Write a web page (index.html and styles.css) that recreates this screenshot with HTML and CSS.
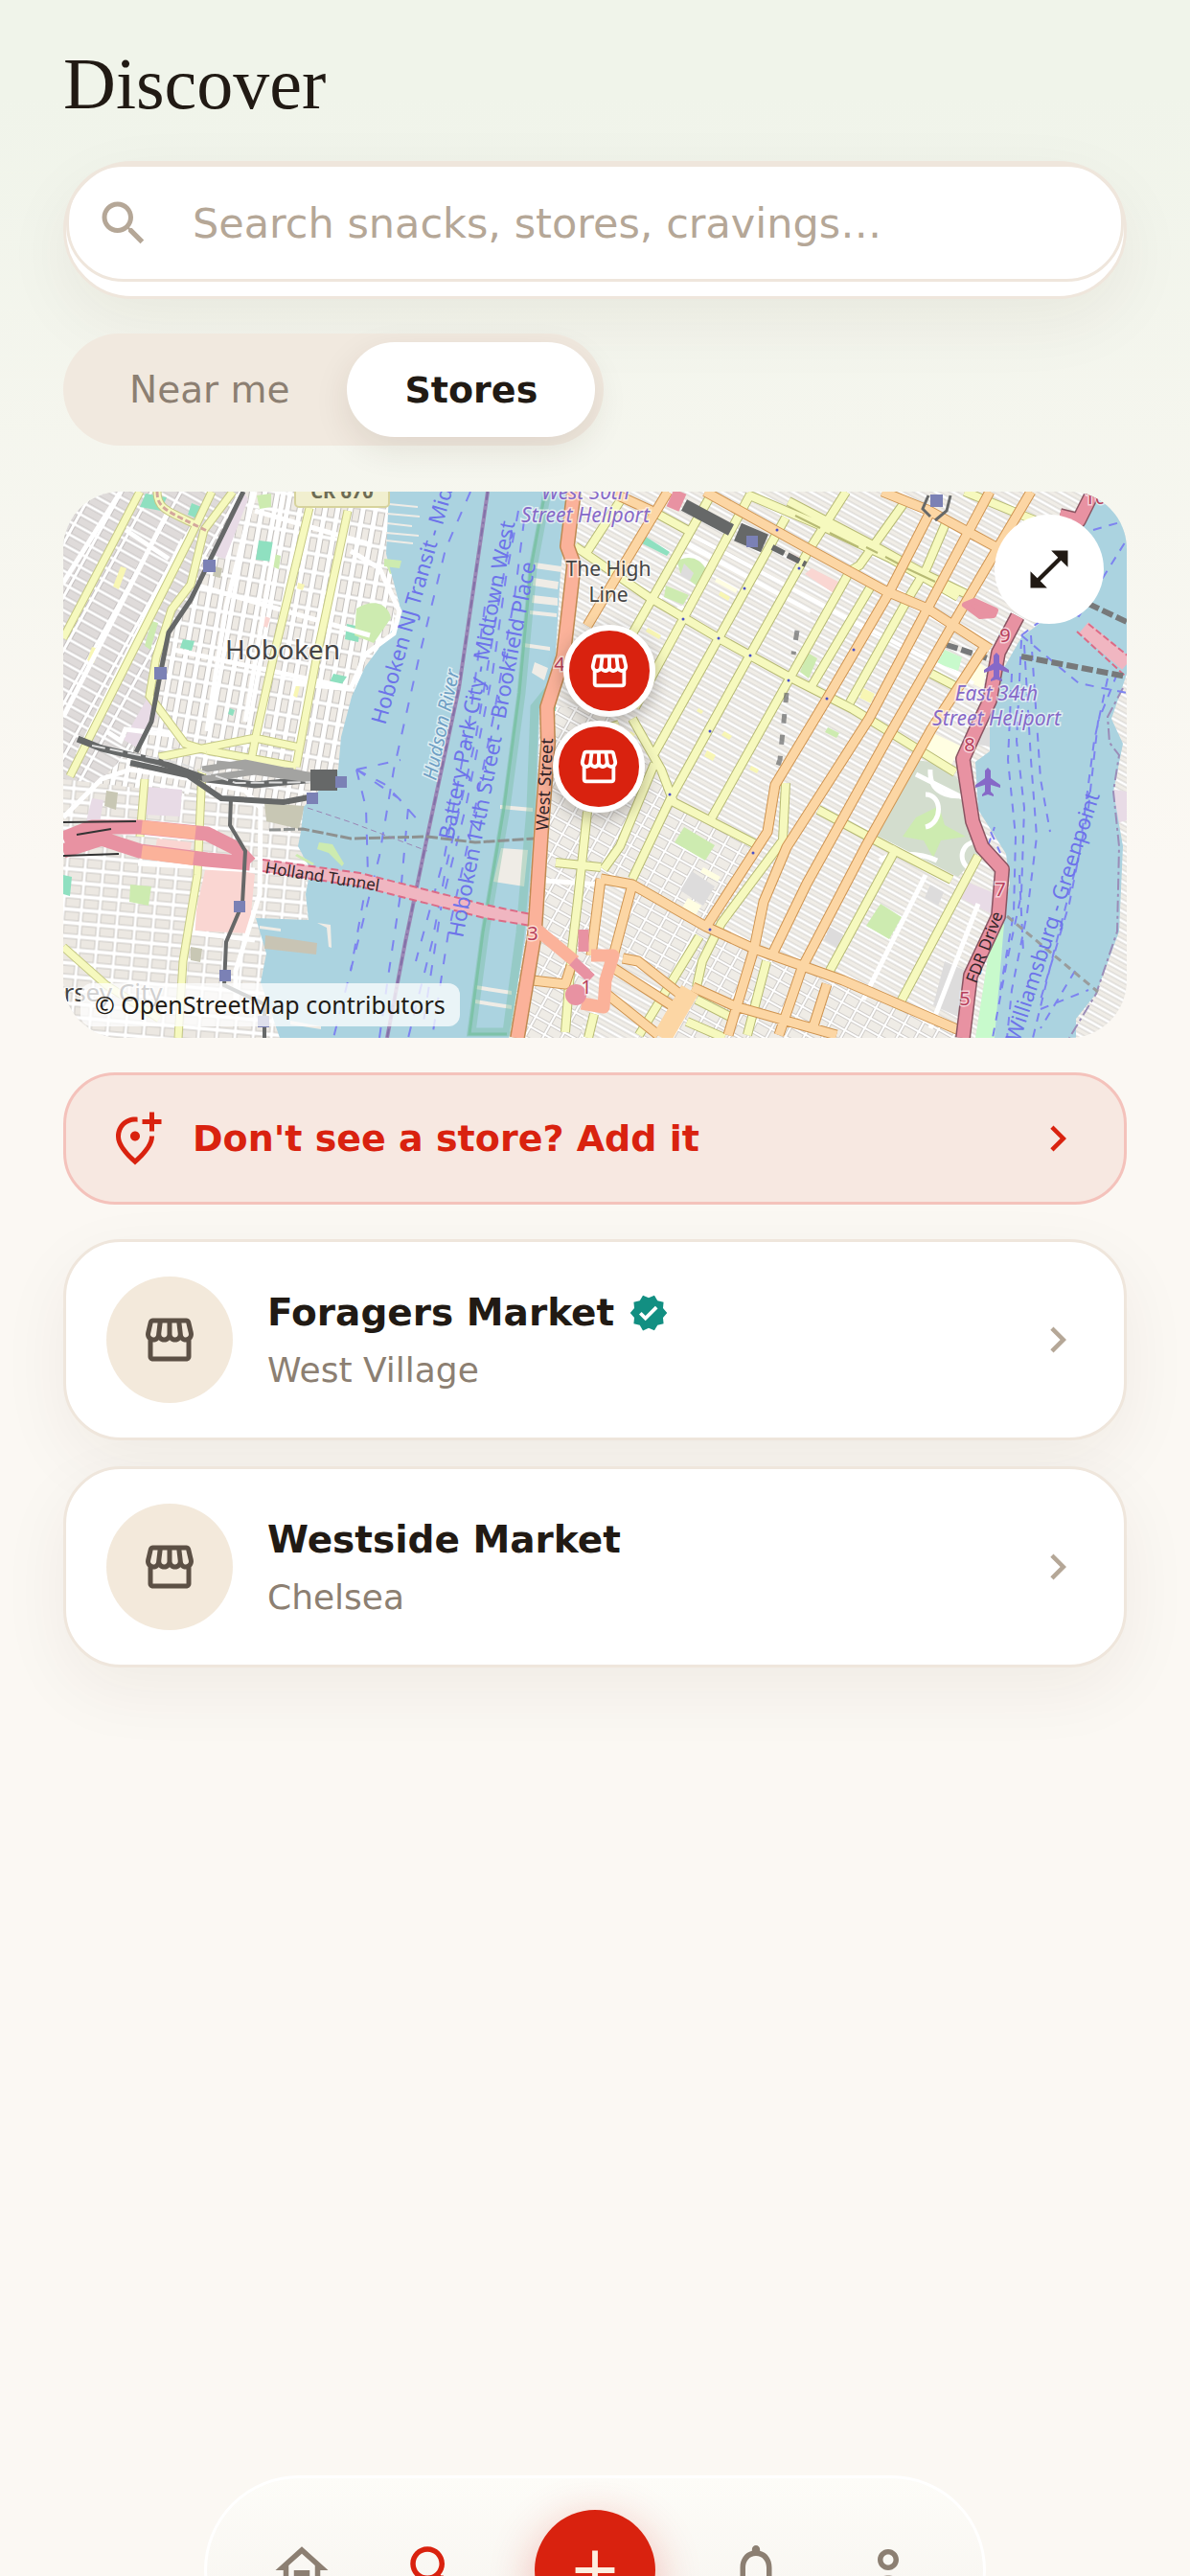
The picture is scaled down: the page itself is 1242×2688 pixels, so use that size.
FILE: index.html
```html
<!DOCTYPE html>
<html lang="en">
<head>
    <meta charset="UTF-8">
    <meta name="viewport" content="width=device-width, initial-scale=1.0">
    <title>Discover</title>
    <link rel="stylesheet" href="styles.css">
</head>
<body>
    <!-- shared icons -->
    <svg class="sprite" aria-hidden="true">
        <symbol id="i-store" viewBox="0 0 24 24"><path d="M21.9 8.89l-1.05-4.37c-.22-.9-1-1.52-1.91-1.52H5.05c-.9 0-1.69.63-1.9 1.52L2.1 8.89c-.24 1.02-.02 2.06.62 2.88.08.11.19.19.28.29V19c0 1.1.9 2 2 2h14c1.1 0 2-.9 2-2v-6.94c.09-.09.2-.18.28-.28.64-.82.87-1.87.62-2.89zm-2.99-3.9l1.05 4.37c.1.42.01.84-.25 1.17-.14.18-.44.47-.94.47-.61 0-1.14-.49-1.21-1.14L16.98 5l1.93-.01zM13 5h1.96l.54 4.52c.05.39-.07.78-.33 1.07-.22.26-.54.41-.95.41-.67 0-1.22-.59-1.22-1.31V5zM8.49 9.52L9.04 5H11v4.69c0 .72-.55 1.31-1.29 1.31-.34 0-.65-.15-.89-.41-.25-.29-.37-.68-.33-1.07zm-4.45-.16L5.05 5h1.97l-.58 4.86c-.08.65-.6 1.14-1.21 1.14-.49 0-.8-.29-.93-.47-.27-.32-.36-.75-.26-1.17zM5 19v-6.03c.08.01.15.03.23.03.87 0 1.66-.36 2.24-.95.6.6 1.4.95 2.31.95.87 0 1.65-.36 2.23-.93.59.57 1.39.93 2.29.93.84 0 1.64-.35 2.24-.95.58.59 1.37.95 2.24.95.08 0 .15-.02.23-.03V19H5z"/></symbol>
        <symbol id="i-chevron" viewBox="0 0 24 24"><path d="M10 6L8.59 7.41 13.17 12l-4.58 4.59L10 18l6-6z"/></symbol>
        <symbol id="i-search" viewBox="0 0 24 24"><path d="M15.5 14h-.79l-.28-.27C15.41 12.59 16 11.11 16 9.5 16 5.91 13.09 3 9.5 3S3 5.91 3 9.5 5.91 16 9.5 16c1.61 0 3.09-.59 4.23-1.57l.27.28v.79l5 4.99L20.49 19l-4.99-5zm-6 0C7.01 14 5 11.99 5 9.5S7.01 5 9.5 5 14 7.01 14 9.5 11.99 14 9.5 14z"/></symbol>
    </svg>

    <main class="page">
        <h1>Discover</h1>

        <div class="search">
            <label class="search-field">
                <svg class="icon" viewBox="0 0 24 24"><use href="#i-search"/></svg>
                <input type="text" aria-label="Search" placeholder="Search snacks, stores, cravings…">
            </label>
        </div>

        <div class="tabs">
            <button class="tab">Near me</button>
            <button class="tab active">Stores</button>
        </div>

        <section class="map">
            <svg class="map-canvas" viewBox="0 0 1110 570" preserveAspectRatio="xMidYMid slice">
                <defs>
                    <pattern id="manhattan" width="60" height="9" patternUnits="userSpaceOnUse" patternTransform="rotate(29)">
                        <rect width="60" height="9" fill="#fff"/>
                        <rect y="2" width="60" height="5" fill="#f0ede7"/>
                        <path d="M0 2H60M0 7H60" stroke="#d2cfcc"/>
                    </pattern>
                    <pattern id="village" width="17" height="12" patternUnits="userSpaceOnUse" patternTransform="rotate(29)">
                        <rect width="17" height="12" fill="#fff"/>
                        <rect x="1.5" y="1.5" width="14" height="9" fill="#efece6" stroke="#d0cdca"/>
                    </pattern>
                    <pattern id="hoboken" width="13" height="19" patternUnits="userSpaceOnUse" patternTransform="rotate(10)">
                        <rect width="13" height="19" fill="#fff"/>
                        <rect x="2.5" y="2" width="7" height="14" fill="#eeeae4" stroke="#c2bfbc"/>
                    </pattern>
                    <pattern id="heights" width="27" height="12" patternUnits="userSpaceOnUse" patternTransform="rotate(29)">
                        <rect width="27" height="12" fill="#fff"/>
                        <rect x="1.5" y="2" width="23" height="8" fill="#dfdbda" stroke="#c5c1c1"/>
                    </pattern>
                    <pattern id="jersey" width="19" height="14" patternUnits="userSpaceOnUse" patternTransform="rotate(5)">
                        <rect width="19" height="14" fill="#fff"/>
                        <rect x="2" y="2" width="15" height="9" fill="#ece8e2" stroke="#cbc8c4"/>
                    </pattern>
                </defs>

                <!-- land -->
                <rect width="1110" height="570" fill="url(#manhattan)"/>
                <path d="M500 225L560 225 640 320 720 366 670 450 596 413 563 405 540 570H465zM594 410L671 454 640 520 575 480zM671 454L935 562V570H600z" fill="url(#village)"/>
                <path d="M0 0H345V330L0 330z" fill="url(#hoboken)"/>
                <path d="M0 0H185L150 80 110 147 95 240 70 270 0 340z" fill="url(#heights)"/>
                <path d="M0 300L250 330 260 570H0z" fill="url(#jersey)"/>

                <!-- land use -->
                <g fill="#e8dbe6">
                    <path d="M188 0l5 8-24 62-14-4zM88 215l10 20-21 32-14-8zM88 308l36 3-2 28-38-2zM30 320l12 2-4 24-14-2zM1092 310l18 3v30l-14 4zM945 408l34 14-4 22-42-22z"/>
                </g>
                <g fill="#fad6d2">
                    <path d="M148 395l30-2 22 6-6 62-60-3zM98 362l36 4-3 18-36-5zM210 130l6 2-3 10-5-2zM781 80l28 14-5 12-30-20zM758 64l14 6-4 6-12-6z"/>
                </g>
                <g fill="#8fe0c0">
                    <path d="M204 51l17 2-3 20-17-2zM296 138l14 3-2 16-14-3zM125 154l12 2-3 10-12-3zM282 190l14 3-6 9-12-3zM0 400l9 2-2 20-7-2zM86 2l22 4-6 14-22-4zM134 12l10 4-4 12-10-4zM608 47l25 16-3 4-28-14zM497 210l17 2v17l-18-2zM174 226l5 2-2 6-5-2z"/>
                </g>
                <g fill="#cdebb0">
                    <path d="M220 65l7 2-2 14-9-4zM202 4l15-2v14l-12 2zM92 135l7 2-8 28-6-4zM70 410l22 2-3 20-20-4zM337 76l14-3 4 9-14 4zM306 122c18-12 34-4 36 10l-18 26-20-8zM292 262l28 3-1 14-28-6zM648 350l32 19-10 16-32-19zM640 70c14-8 30 4 32 15l-10 14-18-14zM629 98l24 10-6 10-20-8zM777 168l10 6-9 21-9-7zM853 430l22 14-13 23-24-14zM798 246l12 6-3 5-12-6z"/>
                    <path d="M920 165l18 8-4 14-22-8z" fill="#c8facc"/>
                    <path d="M885 280c35 0 60 20 65 60l12 30-28 32-86-44c5-30 20-55 37-78z" fill="#d3ddce"/>
                    <path d="M890 340l24-12 6 20 22 12-26 4-8 18-10-18-22-4z"/>
                </g>
                <g fill="#f8f6b4">
                    <path d="M60 78l6 2-8 22-6-3zM30 162l7 2-5 15-7-3zM245 95l7 2-2 6-6-2zM243 202l4 1-3 12-4-2zM686 104l10 6-2 4-10-6zM610 142l14 8-2 4-14-8zM690 250l8 5-3 4-8-5zM672 270l9 5-3 6-9-5zM835 205l12 6-4 10-12-6zM663 226l5 3-2 3-5-3zM718 286l8 4-2 4-8-4zM592 250l5 3-2 3-5-3z"/>
                </g>
                <g fill="#fffee2">
                    <path d="M955 178l9 6-4 22-16-8zM908 252l30 14-14 24-28-14zM652 424l14 8-6 10-14-8zM668 392l18 10-3 5-18-10zM682 90l22 12-2 4-22-12z"/>
                </g>
                <g fill="#dddcdc">
                    <path d="M656 396l24 16-12 20-24-16zM905 410l14 8-6 14-14-8zM920 490l22 10-4 50-30-14zM800 454l14 8-6 14-14-8zM957 250l10-6v22l-12-2zM648 75l10 10-4 8-10-6z"/>
                </g>
                <g fill="#c8c7b4">
                    <path d="M45 312l12 2-2 18-12-4zM210 325l42 3-6 24-34-8zM133 475l12 2-2 14-10-2zM158 78l8 2-2 10-8-2z"/>
                </g>

                <!-- Hudson -->
                <path d="M340 0L337 65 351 118 346 141 315 183 301 214 290 256 287 290 251 329 248 355 245 370 258 394 253 420 256 447 201 445 212 482 206 512 226 570H465L483 462 494 332 497 229 512 202 519 84 522 57 530 0z" fill="#abd3e0"/>
                <g fill="#efece6">
                    <path d="M340 12l30 3v2l-30-3zM338 22l34 3v2l-34-3zM338 32l26 3v2l-26-3zM337 42l34 3v2l-34-3zM337 50l28 3v2l-28-3zM492 74l28 4v6l-28-4zM491 90l26 4-1 8-26-4zM490 108l26 3v8l-27-3zM487 124l28 3v4l-28-3zM480 158l28 4v4l-28-4zM492 178l14 6-4 13-13-8zM457 372l28 2-4 38-32-5zM430 515l38 6v4l-38-6zM430 530l38 6v4l-38-6zM456 327l34 3v4l-34-3zM205 453l22 3v3l-22-3zM265 450l14 2 1 24-3-1-2-20zM237 552l32 6v3l-32-5z"/>
                    <path d="M211 463l54 8-1 12-54-6z" fill="#c8c4b4"/>
                    <path d="M267 366l14 2 12 20-2 3-14-14-12-4zM244 378l18 10-2 2-18-10z" fill="#cdebb0"/>
                    <path d="M335 70l18 2-2 8-16-2z" fill="#cdebb0"/>
                </g>
                <path d="M505 0L490 80 478 210 462 330 440 460 426 564H463L477 460 488 330 492 225 512 200" fill="none" stroke="#77bfa0" stroke-width="9" opacity=".4"/>
                <path d="M503 0L488 80 476 210 460 330 438 460 424 566H463" fill="none" stroke="#77bfa0" stroke-width="3" opacity=".8"/>
                <path d="M443 0L413 205 382 350 357 470 338 570" fill="none" stroke="#9b86b5" stroke-width="4"/>
                <path d="M443 0L413 205 382 350 357 470 338 570" fill="none" stroke="#8271a8" stroke-width="2" stroke-dasharray="9 4 2 4"/>

                <!-- East River -->
                <path d="M1082 0L1065 34 1025 133 1000 152 980 187 967 233 967 271 952 282 955 332 984 378 988 409 980 447 955 570H1057L1057 550 1078 524 1102 459 1106 370 1096 313 1106 263 1094 237 1106 202 1110 190V0z" fill="#abd3e0"/>
                <path d="M970 455l12-4-10 119h-20z" fill="#c8facc"/>
                <path d="M1106 205L1090 235 1092 262 1102 275 1096 313 1102 370 1100 459 1078 524 1050 570" fill="none" stroke="#9b8db8" stroke-width="2" stroke-dasharray="12 4 3 4"/>

                <!-- ferry routes -->
                <g fill="none" stroke="#7d83f0" stroke-width="2" stroke-dasharray="11 12">
                    <path d="M425 0L399 60 372 170 345 290 330 380 305 480 282 570"/>
                    <path d="M306 290L316 330 318 400 300 500M306 290L350 320 372 345M306 290L352 280M306 290L335 305 360 330 352 420 340 500 330 570"/>
                    <path d="M475 20L462 90 448 190 420 330 395 430 375 560M468 40L452 130 430 260 400 390 385 470 360 570"/>
                    <path d="M481 30L471 110 450 230 424 360 402 460 385 570M440 120L424 240 398 380 368 490"/>
                </g>
                <g fill="none" stroke="#7d83f0" stroke-width="2" stroke-dasharray="9 8">
                    <path d="M1000 155L995 260 1003 330 1000 420 985 490 970 570M1003 160L1010 280 1016 360 1006 440 990 520 985 570M990 190L986 280 994 360 992 440 978 520"/>
                    <path d="M1000 150L1040 120 1060 130 1110 50M1100 190L1080 240 1070 330 1050 430 1020 530M1090 195L1076 260 1060 380 1034 480 1012 570M1075 40L1110 30"/>
                    <path d="M1010 150L1020 300 1030 355M998 400L1002 480M1056 500L1020 560M1020 540L1070 520M965 370L972 350M968 355l10 22M1000 150L1060 200 1110 210"/>
                </g>

                <!-- piers and tunnels -->
                <path d="M215 353L250 352 300 362 380 360 430 366 492 362" fill="none" stroke="#8e9190" stroke-width="3" stroke-dasharray="12 3"/>
                <path d="M255 330L300 345 380 375" fill="none" stroke="#9b86b5" stroke-dasharray="6 4"/>
                <path d="M208 390L310 405 440 438 488 447" fill="none" stroke="#f0b6c1" stroke-width="13"/>
                <path d="M208 384L310 398 440 431 488 441M208 396L310 412 440 445 488 453" fill="none" stroke="#dc6b86" stroke-width="2" stroke-dasharray="8 4"/>
                <path d="M1065 142L1110 180" stroke="#f0b6c1" stroke-width="15"/>
                <path d="M1070 138L1112 172M1058 146L1108 192" stroke="#dc6b86" stroke-width="2" stroke-dasharray="7 3"/>
                <path d="M1000 172L1110 193M922 160L965 174M1070 117L1110 136" stroke="#77797a" stroke-width="6" stroke-dasharray="12 4"/>
                <path d="M985 443L1080 522" stroke="#9a9c9c" stroke-width="3" stroke-dasharray="8 5"/>

                <!-- white streets -->
                <g fill="none" stroke="#fff" stroke-width="5">
                    <path d="M60 0L0 95M110 20L0 235M125 50L15 275M200 0L170 120 150 250M230 0L190 240M200 20L320 55M65 40L110 70M130 95L320 150M115 165L300 205"/>
                    <path d="M300 62L330 80 351 125 345 148 315 170 300 206M300 206L240 200M0 340L40 300 70 290 135 300 190 312 206 330 205 420 180 500 180 530M45 250L60 260 65 248 120 255M78 388L200 395M140 385L135 460 200 468M900 400L835 530M940 320L890 295M900 350c18-4 18-34 0-34M912 385c-20-10-50-8-60 0M905 290c-2 30 30 30 40 26M955 365c-18 0-22 20-10 28M955 430L905 560M490 405L560 410"/>
                    <path d="M655 45L800 122 950 200M650 55L780 125M625 88C640 60 665 62 674 82M624 108c-6 14 18 18 24 12" stroke-width="4"/>
                </g>

                <!-- secondary roads -->
                <g id="secondary" fill="none" stroke="#b7ba74" stroke-width="10">
                    <path id="yellow" d="M674 7L614 113 580 173M717 3L647 133 597 225M754 27L684 153 617 273M817 0L777 63 717 170 634 320 594 404M881 7L831 77 821 83 757 197 677 340M844 97L781 203M921 33L901 80 881 113 821 220M714 3L794 37 864 70 934 110M757 10L847 57 901 87 945 108M941 0L1014 30M534 57L611 110 684 153 757 193 824 227 931 293M618 22L651 40M581 10L544 67M594 237L624 290 637 324 721 367M547 334L537 427 531 477 524 564M617 284L581 370 564 394M754 304L751 364 687 450 667 490 661 517M664 464L601 567M734 490L714 567M514 387L561 392M788 332L861 371 927 405M870 371L800 500M955 380L870 540M661 530L700 550M651 553L690 570M554 545L548 570M560 250L580 243M906 190L935 205"/>
                </g>
                <use href="#yellow" fill="none" stroke="#f6f9be" stroke-width="8"/>
                <path d="M764 25L790 38M800 43L830 58M838 58L850 64M858 68L875 77M880 80L910 94" stroke="#b7ba74" stroke-width="2"/>
                <g fill="none" stroke="#c6c986" stroke-width="9">
                    <path id="jersey-roads" d="M80 0L0 153M155 0L133 47 7 297M177 0L147 40 133 97 113 123 97 173 90 213 127 263 150 270M100 277L200 257 247 267M243 287L150 270M257 17L220 170 200 260 197 276M297 20L265 170 243 287M98 0C98 18 108 20 142 36M85 300L80 360M145 290L140 400 125 490 120 570M0 475L45 515 100 550"/>
                </g>
                <use href="#jersey-roads" fill="none" stroke="#f6f9be" stroke-width="7"/>
                <path d="M98 0C98 18 108 20 152 42" fill="none" stroke="#d3a79c" stroke-width="3" stroke-dasharray="6 3"/>

                <!-- primary roads -->
                <g fill="none" stroke="#cf9450" stroke-width="11" stroke-linejoin="round">
                    <path id="orange" d="M906 19L861 107 796 218 743 306 735 355 671 454M967 0L902 122 841 237 755 371 731 428 721 477 694 567M1010 0L927 141 861 256 776 409 739 485M963 160L906 248 837 371 771 497 747 567M670 0L780 61 857 103 902 122 967 164M855 0L902 19 972 57M561 404L594 410 671 454 721 477 814 510 935 562M561 404L551 484M594 410L574 485M584 487L600 490 647 527M574 497L641 540M567 524L621 567M657 517L701 537 807 567M797 514L781 564M631 0L587 73 547 140M575 2L614 20M490 510L524 514 530 495"/>
                </g>
                <use href="#orange" fill="none" stroke="#fcd6a4" stroke-width="9" stroke-linejoin="round"/>
                <path d="M654 520L625 570" stroke="#fcd6a4" stroke-width="20"/>

                <!-- trunk roads and motorways -->
                <g fill="none" stroke-linejoin="round">
                    <path d="M533 0L526 57 533 76 522 172 505 225 506 263 499 355 492 462 474 570" stroke="#c08a52" stroke-width="16"/>
                    <path d="M533 0L526 57 533 76 522 172 505 225 506 263 499 355 492 462 474 570M492 455L534 490M551 484H574L566 510 564 538 541 534" stroke="#fbb29a" stroke-width="13"/>
                    <path d="M532 490L551 508M543 457V480" stroke="#e892a2" stroke-width="11"/>
                    <circle cx="535" cy="525" r="11" fill="#e892a2"/>
                    <path d="M996 130L976 168 967 218 951 252 939 279 949 344 959 371 980 394 976 443 947 505 939 570M1075 0L1060 30 1040 25" stroke="#8a5562" stroke-width="16"/>
                    <path d="M996 130L976 168 967 218 951 252 939 279 949 344 959 371 980 394 976 443 947 505 939 570M1075 0L1060 30 1040 25" stroke="#e892a2" stroke-width="13"/>
                    <path d="M0 362L30 350 80 350 150 357 180 372 195 388M0 375L40 362 80 375 150 384 195 388" stroke="#e892a2" stroke-width="15"/>
                    <path d="M82 350L138 356M82 376L136 383" stroke="#fbb29a" stroke-width="14"/>
                    <path d="M0 345L76 344M0 380L58 378M14 358L50 352" stroke="#333" stroke-width="2"/>
                    <path d="M941 118l10-4 22 10-2 5-14 1z" fill="#e892a2" stroke="#e892a2" stroke-width="6"/>
                    <path d="M644 0L636 18" stroke="#e892a2" stroke-width="14"/>
                </g>

                <!-- railways -->
                <g fill="none" stroke="#666868">
                    <path d="M188 0L150 78 133 113 110 147 100 197 92 240 76 272" stroke-width="5"/>
                    <path d="M175 320L174 348 190 375 187 430 170 470 168 515 210 535V570" stroke-width="4"/>
                    <path d="M15 258L40 268 100 282 150 300 200 306 285 298" stroke-width="7"/>
                    <path d="M70 283L130 296 165 320 230 324 262 318" stroke-width="6"/>
                    <path d="M145 290L190 283 260 297M145 300L200 292 270 302M160 284L240 292" stroke-width="7" stroke="#a3a3a1"/>
                    <path d="M30 265L120 283 180 304 270 303" stroke="#ddd" stroke-width="2" stroke-dasharray="14 5"/>
                    <path d="M648 14L697 40" stroke-width="13"/>
                    <path d="M704 42L732 54" stroke-width="20"/>
                    <path d="M740 58L775 76" stroke-width="6" stroke-dasharray="14 4"/>
                    <path d="M903 4l-6 14 8 8 M926 4l-4 16-12 10" stroke-width="3"/>
                    <path d="M766 145L762 170M755 210L748 280 742 296" stroke-width="5" stroke-dasharray="10 12" opacity=".7"/>
                </g>
                <path d="M258 290h28v22h-28z" fill="#666868"/>
                <g fill="#7b81b5">
                    <path d="M146 71h13v13h-13zM95 183h13v13h-13zM284 297h12v12h-12zM254 314h12v12h-12zM178 427h12v12h-12zM163 499h12v12h-12zM203 547h12v12h-12zM713 46h12v12h-12zM905 3h13v13h-13z"/>
                </g>
                <g fill="#4a50c8">
                    <circle cx="647" cy="133" r="1.5"/><circle cx="684" cy="153" r="1.5"/><circle cx="717" cy="171" r="1.5"/><circle cx="757" cy="197" r="1.5"/><circle cx="797" cy="216" r="1.5"/><circle cx="711" cy="101" r="1.5"/><circle cx="768" cy="80" r="1.5"/><circle cx="745" cy="40" r="1.5"/><circle cx="675" cy="250" r="1.5"/><circle cx="633" cy="316" r="1.5"/><circle cx="825" cy="165" r="1.5"/><circle cx="720" cy="377" r="1.5"/><circle cx="675" cy="457" r="1.5"/>
                </g>
                <g fill="#8669c8">
                    <path id="plane" d="M974 168l3 3v8l10 7v3l-10-3v7l3 3v2l-6-2-6 2v-2l3-3v-7l-10 3v-3l10-7v-8z"/>
                    <use href="#plane" x="-9" y="120"/>
                </g>

                <!-- labels -->
                <g class="map-label">
                    <rect x="242" y="-14" width="98" height="30" rx="4" fill="#f1efcf" stroke="#d7d39c" stroke-width="2"/>
                    <text x="291" y="7" font-size="20" class="bold">CR 670</text>
                    <text x="229" y="175" font-size="28" class="halo">Hoboken</text>
                    <text x="569" y="88" font-size="21" class="halo">The High</text>
                    <text x="569" y="115" font-size="21" class="halo">Line</text>
                    <text x="52" y="532" font-size="26" class="halo">rsey City</text>
                    <g class="heli">
                        <text x="545" y="8" font-size="21">West 30th</text>
                        <text x="545" y="32" font-size="21">Street Heliport</text>
                        <text x="974" y="218" font-size="21">East 34th</text>
                        <text x="974" y="244" font-size="21">Street Heliport</text>
                    </g>
                    <g class="ferry">
                        <text transform="translate(336 244) rotate(-74)" font-size="22">Hoboken NJ Transit - Midtown</text>
                        <text transform="translate(407 364) rotate(-79)" font-size="22">Battery Park City - Midtown West</text>
                        <text transform="translate(417 466) rotate(-79)" font-size="22">Hoboken 14th Street - Brookfield Place</text>
                        <text transform="translate(998 575) rotate(-72)" font-size="22">Williamsburg - Greenpoint</text>
                    </g>
                    <text class="river" transform="translate(389 302) rotate(-78)" font-size="20">Hudson River</text>
                    <text class="road" transform="translate(506 354) rotate(-87)" font-size="18">West Street</text>
                    <text class="road" transform="translate(210 398) rotate(9)" font-size="17">Holland Tunnel</text>
                    <text class="road" transform="translate(953 514) rotate(-69)" font-size="17">FDR Drive</text>
                    <g class="exit">
                        <text x="518" y="187">4</text>
                        <text x="490" y="468">3</text>
                        <text x="546" y="524">1</text>
                        <text x="983" y="157">9</text>
                        <text x="946" y="271">8</text>
                        <text x="978" y="422">7</text>
                        <text x="941" y="536">5</text>
                        <text x="1077" y="13">10</text>
                    </g>
                </g>
            </svg>
            <button class="pin pin-chelsea" aria-label="Westside Market"><svg class="icon" viewBox="0 0 24 24"><use href="#i-store"/></svg></button>
            <button class="pin pin-village" aria-label="Foragers Market"><svg class="icon" viewBox="0 0 24 24"><use href="#i-store"/></svg></button>
            <button class="expand" aria-label="Expand map"><svg class="icon" viewBox="0 0 24 24"><path d="M21 11V3h-8l3.29 3.29-10 10L3 13v8h8l-3.29-3.29 10-10z"/></svg></button>
            <div class="attribution">© OpenStreetMap contributors</div>
        </section>

        <button class="add-store">
            <svg class="icon" viewBox="0 0 24 24"><path d="M13.02 5.05c-.33-.03-.67-.05-1.02-.05-3.35 0-6 2.57-6 6.2 0 2.34 1.95 5.44 6 9.14 4.05-3.7 6-6.79 6-9.14V11h2v.2c0 3.32-2.67 7.25-8 11.8-5.33-4.55-8-8.48-8-11.8C4 6.22 7.8 3 12 3c.34 0 .68.02 1.02.06v1.99zM12 9c1.1 0 2 .9 2 2s-.9 2-2 2-2-.9-2-2 .9-2 2-2zM20 1v3h3v2h-3v3h-2V6h-3V4h3V1z"/></svg>
            <span>Don't see a store? Add it</span>
            <svg class="icon chevron" viewBox="0 0 24 24"><use href="#i-chevron"/></svg>
        </button>

        <div class="stores">
            <a class="store" href="#">
                <span class="avatar"><svg class="icon" viewBox="0 0 24 24"><use href="#i-store"/></svg></span>
                <span class="store-info">
                    <span class="store-name">Foragers Market
                        <svg class="verified" viewBox="0 0 24 24"><path d="M23 12l-2.44-2.79.34-3.69-3.61-.82-1.89-3.2L12 2.96 8.6 1.5 6.71 4.69 3.1 5.5l.34 3.7L1 12l2.44 2.79-.34 3.7 3.61.82L8.6 22.5l3.4-1.47 3.4 1.46 1.89-3.19 3.61-.82-.34-3.69L23 12zm-12.91 4.72l-3.8-3.81 1.48-1.48 2.32 2.33 5.85-5.87 1.48 1.48-7.33 7.35z"/></svg>
                    </span>
                    <span class="store-area">West Village</span>
                </span>
                <svg class="icon chevron" viewBox="0 0 24 24"><use href="#i-chevron"/></svg>
            </a>
            <a class="store" href="#">
                <span class="avatar"><svg class="icon" viewBox="0 0 24 24"><use href="#i-store"/></svg></span>
                <span class="store-info">
                    <span class="store-name">Westside Market</span>
                    <span class="store-area">Chelsea</span>
                </span>
                <svg class="icon chevron" viewBox="0 0 24 24"><use href="#i-chevron"/></svg>
            </a>
        </div>
    </main>

    <nav class="bottom-nav">
        <a href="#" aria-label="Home"><svg viewBox="0 0 24 24"><path d="M12 3L2 12h3v8h14v-8h3L12 3zm5 15H7v-7.81l5-4.5 5 4.5V18z"/><path d="M9 12h6v7H9z"/></svg></a>
        <a href="#" class="current" aria-label="Discover"><svg viewBox="0 0 24 24"><use href="#i-search"/></svg></a>
        <button class="fab" aria-label="Add"><svg viewBox="0 0 24 24"><path d="M19 13h-6v6h-2v-6H5v-2h6V5h2v6h6v2z"/></svg></button>
        <a href="#" aria-label="Notifications"><svg viewBox="0 0 24 24"><path d="M12 22c1.1 0 2-.9 2-2h-4c0 1.1.9 2 2 2zm6-6v-5c0-3.07-1.63-5.64-4.5-6.32V4c0-.83-.67-1.5-1.5-1.5s-1.5.67-1.5 1.5v.68C7.64 5.36 6 7.92 6 11v5l-2 2v1h16v-1l-2-2zm-2 1H8v-6c0-2.48 1.51-4.5 4-4.5s4 2.02 4 4.5v6z"/></svg></a>
        <a href="#" aria-label="Profile"><svg viewBox="0 0 24 24"><path d="M12 6c1.1 0 2 .9 2 2s-.9 2-2 2-2-.9-2-2 .9-2 2-2m0 10c2.7 0 5.8 1.29 6 2H6c.23-.72 3.31-2 6-2m0-12C9.79 4 8 5.79 8 8s1.79 4 4 4 4-1.79 4-4-1.79-4-4-4zm0 10c-2.67 0-8 1.34-8 4v2h16v-2c0-2.66-5.33-4-8-4z"/></svg></a>
    </nav>
</body>
</html>
```
FILE: styles.css
```css
* {
    box-sizing: border-box;
}
body {
    margin: 0;
    min-height: 100vh;
    font-family: 'DejaVu Sans', sans-serif;
    font-size: 39px;
    color: #211a14;
    background: linear-gradient(#f0f4ea 0, #f0f4ea 100px, #fbf8f3 900px);
    overflow-x: hidden;
}
button, input {
    font: inherit;
    color: inherit;
    border: none;
    padding: 0;
    background: none;
}
button {
    cursor: pointer;
}
a {
    color: inherit;
    text-decoration: none;
}
svg {
    fill: currentColor;
    flex: none;
}
.sprite {
    display: none;
}
.icon {
    width: 60px;
    height: 60px;
}
.page {
    display: flex;
    flex-direction: column;
    gap: 36px;
    padding: 42px 66px 240px;
}
h1 {
    margin: 0;
    font-family: 'Liberation Serif', serif;
    font-size: 76px;
    font-weight: 400;
    line-height: 90px;
}
.search {
    padding-bottom: 15px;
    background: #fff;
    border: 3px solid #efe6dc;
    border-radius: 72px;
    box-shadow: 0 24px 72px rgba(60, 40, 20, 0.06);
}
.search-field {
    display: flex;
    align-items: center;
    gap: 42px;
    height: 123px;
    padding: 0 27px;
    border: 3px solid #efe6dc;
    border-radius: 60px;
    color: #b5a797;
}
.search-field input {
    flex: 1;
    min-width: 0;
    font-size: 43px;
    outline: none;
}
.search-field input::placeholder {
    color: #b5a797;
    opacity: 1;
}
.tabs {
    display: flex;
    align-self: flex-start;
    margin-bottom: 12px;
    padding: 9px;
    background: #f1e9df;
    border-radius: 60px;
}
.tab {
    height: 99px;
    padding: 0 60px;
    border-radius: 50px;
    color: #8c7f72;
}
.tab.active {
    background: #fff;
    color: #211a14;
    font-size: 38px;
    font-weight: 700;
    box-shadow: 0 12px 36px rgba(60, 40, 20, 0.1);
}

/* map */
.map {
    position: relative;
    height: 570px;
    border-radius: 60px;
    overflow: hidden;
}
.map-canvas {
    display: block;
    width: 100%;
    height: 100%;
}
.map-label {
    font-family: 'Noto Sans', sans-serif;
    fill: #444;
    text-anchor: middle;
}
.map-label .bold {
    font-weight: 700;
    fill: #6d6c55;
}
.map-label .halo, .heli, .river, .exit {
    stroke: rgba(255, 255, 255, 0.6);
    stroke-width: 3px;
    paint-order: stroke;
}
.heli {
    fill: #8669c8;
    font-style: italic;
}
.ferry {
    fill: #6d73ea;
    text-anchor: start;
}
.map-label .river {
    fill: #6f9fc4;
    font-style: italic;
    text-anchor: start;
}
.map-label .road {
    fill: #33262a;
    text-anchor: start;
}
.exit {
    fill: #b8405c;
    font-size: 20px;
}
.pin {
    position: absolute;
    display: flex;
    align-items: center;
    justify-content: center;
    width: 96px;
    height: 96px;
    background: #d9220f;
    border: 6px solid #fff;
    border-radius: 50%;
    color: #fff;
    box-shadow: 0 6px 18px rgba(33, 26, 20, 0.3);
}
.pin .icon {
    width: 46px;
    height: 46px;
}
.pin-chelsea {
    left: 47%;
    top: 139px;
}
.pin-village {
    left: 46%;
    top: 239px;
}
.expand {
    position: absolute;
    top: 24px;
    right: 24px;
    display: flex;
    align-items: center;
    justify-content: center;
    width: 114px;
    height: 114px;
    background: #fff;
    border-radius: 50%;
}
.expand .icon {
    width: 52px;
    height: 52px;
}
.attribution {
    position: absolute;
    left: 18px;
    bottom: 12px;
    padding: 0 15px;
    background: rgba(255, 255, 255, 0.75);
    border-radius: 12px;
    font-family: 'Noto Sans', sans-serif;
    font-size: 25px;
    line-height: 45px;
}

/* list */
.add-store {
    display: flex;
    align-items: center;
    gap: 30px;
    height: 138px;
    padding: 0 42px;
    background: #f7e8e1;
    border: 3px solid #f4c2bb;
    border-radius: 54px;
    color: #d9220f;
    font-size: 38px;
    font-weight: 700;
}
.chevron {
    width: 54px;
    height: 54px;
    margin-left: auto;
}
.stores {
    display: flex;
    flex-direction: column;
    gap: 27px;
}
.store {
    display: flex;
    align-items: center;
    gap: 36px;
    padding: 36px 42px;
    background: #fff;
    border: 3px solid #efe6dc;
    border-radius: 60px;
    box-shadow: 0 24px 72px rgba(60, 40, 20, 0.06);
}
.store .chevron {
    color: #b5a797;
}
.avatar {
    display: flex;
    align-items: center;
    justify-content: center;
    width: 132px;
    height: 132px;
    background: #f3e9db;
    border-radius: 50%;
    color: #5c5045;
}
.store-info {
    display: flex;
    flex-direction: column;
    gap: 9px;
}
.store-name {
    display: flex;
    align-items: center;
    gap: 15px;
    font-weight: 700;
    line-height: 54px;
}
.store-area {
    font-size: 36px;
    line-height: 48px;
    color: #8c7f72;
}
.verified {
    width: 42px;
    height: 42px;
    color: #128f82;
}

/* bottom bar, hangs past the lower edge */
.bottom-nav {
    position: fixed;
    left: 50%;
    bottom: -93px;
    display: flex;
    align-items: center;
    height: 198px;
    padding: 0 30px;
    background: linear-gradient(#fdfcf8, #f6f3ee);
    border: 3px solid #fff;
    border-radius: 99px;
    color: #8c7f72;
    transform: translateX(-50%);
}
.bottom-nav a {
    display: flex;
    justify-content: center;
    width: 138px;
}
.bottom-nav a svg {
    width: 66px;
    height: 66px;
}
.bottom-nav .current {
    color: #d9220f;
}
.fab {
    display: flex;
    align-items: center;
    justify-content: center;
    width: 126px;
    height: 126px;
    margin: 0 36px;
    background: #d9220f;
    border-radius: 50%;
    color: #fdefe0;
    box-shadow: 0 12px 48px rgba(217, 34, 15, 0.3);
}
.fab svg {
    width: 70px;
    height: 70px;
}
```
